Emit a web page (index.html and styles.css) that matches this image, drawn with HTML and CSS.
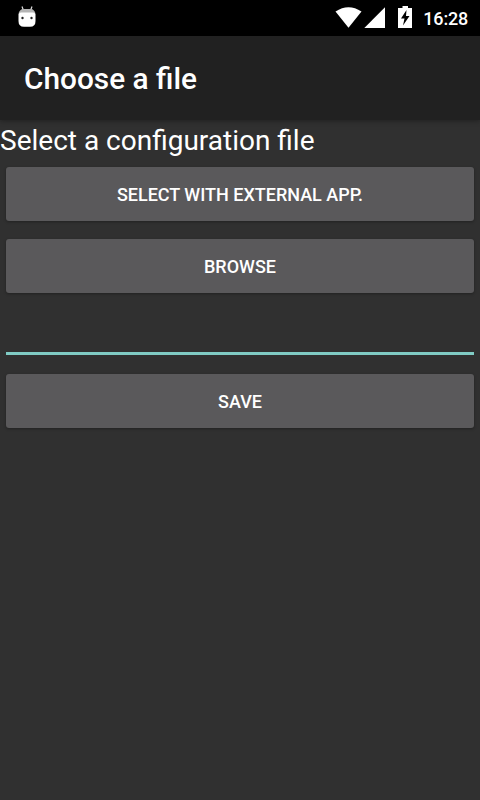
FILE: index.html
```html
<!DOCTYPE html>
<html lang="en">
<head>
<meta charset="utf-8">
<title>Choose a file</title>
<link rel="stylesheet" href="styles.css">
</head>
<body>
<div class="status">
<svg class="robot" width="20" height="24" viewBox="0 0 20 24"><path d="M5 1.500 6.300 5M15 1.500 13.700 5" stroke="#ddd" stroke-width="1.200"/><path d="M1.500 8.500Q3 4 6 4H14Q17 4 18.500 8.500Z" fill="#b5b5b5"/><path d="M1.500 9Q2 7.500 4 7.500H16Q18 7.500 18.500 9V16Q18.500 21.800 13 21.800H7Q1.500 21.800 1.500 16Z" fill="#fff"/><circle cx="5.500" cy="13" r="1.200" fill="#222"/><circle cx="14.500" cy="13" r="1.200" fill="#222"/></svg>
<svg class="signals" width="78" height="24" viewBox="0 0 78 24"><path d="M.5 6.500Q13.500 -2 26.500 6.500L13.500 22.800Z" fill="#fff"/><path d="M29.300 23 50 2.200V23Z" fill="#fff"/><path d="M63 3H67.500V1H73V3H77V23H63Z" fill="#fff"/><path d="M71.500 5 66 13.500H69.500L68 20.500 74.500 11H71Z" fill="#000"/></svg>
<span class="time">16:28</span>
</div>
<header class="bar"><h1>Choose a file</h1></header>
<main>
<p class="label">Select a configuration file</p>
<button class="btn">SELECT WITH EXTERNAL APP.</button>
<button class="btn">BROWSE</button>
<input class="field" type="text" aria-label="File path">
<button class="btn">SAVE</button>
</main>
</body>
</html>
```
FILE: styles.css
```css
* { box-sizing: border-box; }
body { margin: 0; height: 800px; background: #303030; color: #fff; font-family: Roboto, sans-serif; overflow: hidden; }
.status { height: 36px; background: #000; display: flex; align-items: flex-start; padding: 5px 12px 0 17px; }
.signals { margin-left: auto; }
.time { font-size: 18px; font-weight: 500; line-height: 28px; margin-left: 10px; letter-spacing: -.2px; }
.bar { height: 84px; background: #212121; padding: 2px 0 0 24px; display: flex; align-items: center; box-shadow: 0 1px 5px rgba(0,0,0,.35); }
h1 { margin: 0; font-size: 29.800px; font-weight: 500; line-height: 36px; }
main { display: flex; flex-direction: column; }
.label { margin: 3px 0 8px; font-size: 28px; line-height: 36px; }
.btn { margin: 0 6px 18px; height: 54px; border: 0; border-radius: 3px; background: #5a595b; color: #fff; font: 500 18px/52px Roboto, sans-serif; padding: 2px 0 0; box-shadow: 0 1px 3px rgba(0,0,0,.3); }
.field { height: 44px; margin: 0 6px 19px; border: 0; border-bottom: 3px solid #80cbc4; background: none; outline: 0; padding: 0; }
```
